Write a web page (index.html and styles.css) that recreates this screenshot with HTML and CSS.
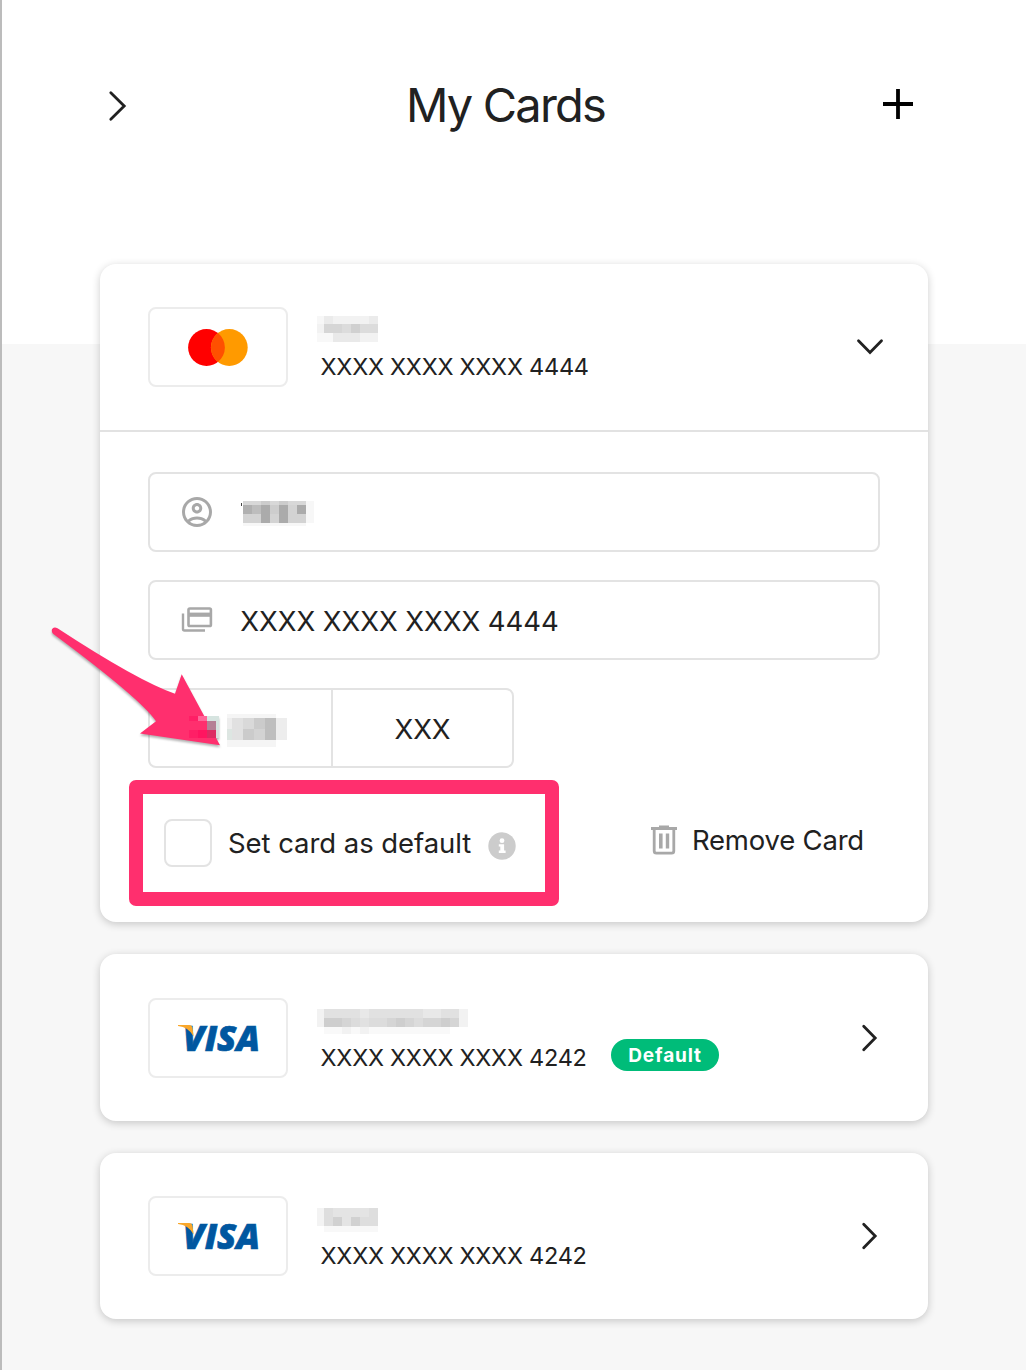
FILE: index.html
```html
<!DOCTYPE html>
<html lang="en">
<head>
<meta charset="utf-8">
<title>My Cards</title>
<link rel="stylesheet" href="styles.css">
</head>
<body>
<div class="page">
  <header class="header">
    <svg class="back" width="20" height="32" viewBox="0 0 20 32"><path d="M2.800 2.800 16.200 16 2.800 29.200"/></svg>
    <h1 class="title">My Cards</h1>
    <svg class="add" width="30" height="30" viewBox="0 0 30 30"><path d="M0 15h30M15 0v30"/></svg>
  </header>

  <main class="cards">
    <section class="card">
      <div class="card-head open">
        <div class="brand">
          <svg width="60" height="38" viewBox="0 0 60 38"><circle cx="18.500" cy="19.500" r="18.400" fill="#f00"/><circle cx="41.300" cy="19.500" r="18.400" fill="#ff9a00"/><path d="M29.900 5.060a18.400 18.400 0 0 1 0 28.880a18.400 18.400 0 0 1 0-28.880z" fill="#ff5000"/></svg>
        </div>
        <div class="summary">
          <svg class="mosaic" width="64" height="28" viewBox="1 1 64 28" shape-rendering="crispEdges">
            <path fill="#f7f7f7" d="M0 1h8v8h-8z"/><path fill="#ebebeb" d="M8 1h9v8h-9zM53 1h9v8h-9z"/><path fill="#f2f2f2" d="M17 1h36v8h-36zM0 9h8v9h-8zM44 18h18v9h-18z"/>
            <path fill="#d6d6d6" d="M8 9h18v9h-18z"/><path fill="#dcdcdc" d="M26 9h36v9h-36z"/><path fill="#d0d0d0" d="M35 9h9v9h-9z"/>
            <path fill="#f8f8f8" d="M0 18h17v9h-17z"/><path fill="#e9e9e9" d="M17 18h27v9h-27z"/>
          </svg>
          <div class="number">XXXX XXXX XXXX 4444</div>
        </div>
        <svg class="chevron" width="28" height="28" viewBox="0 0 28 28"><path d="M2.500 7.700 14 19.500 25.500 7.700"/></svg>
      </div>

      <div class="details">
        <div class="field">
          <svg class="field-icon" width="36" height="36" viewBox="0 0 24 24"><path fill="#a8a8a8" d="M12 2C6.480 2 2 6.480 2 12s4.480 10 10 10 10-4.480 10-10S17.520 2 12 2zM7.350 18.500C8.660 17.560 10.260 17 12 17s3.340.560 4.650 1.500C15.340 19.440 13.740 20 12 20s-3.340-.560-4.650-1.500zm10.790-1.380C16.450 15.800 14.320 15 12 15s-4.450.800-6.140 2.120C4.700 15.730 4 13.950 4 12c0-4.420 3.580-8 8-8s8 3.580 8 8c0 1.950-.700 3.730-1.860 5.120zM12 6c-1.930 0-3.500 1.570-3.500 3.500S10.070 13 12 13s3.500-1.570 3.500-3.500S13.930 6 12 6zm0 5c-.830 0-1.500-.670-1.500-1.500S11.170 8 12 8s1.500.670 1.500 1.500S12.830 11 12 11z"/></svg>
          <svg class="mosaic" width="74" height="26" viewBox="0 0 74 26" shape-rendering="crispEdges">
            <path fill="#444" d="M0 2h1v3h-1z"/><path fill="#d8d8d8" d="M2 0h63v4h-63z"/><path fill="#ccc" d="M20 0h9v4h-9zM38 0h9v4h-9z"/>
            <path fill="#d3d3d3" d="M2 4h63v18h-63z"/><path fill="#b0b0b0" d="M2 4h9v9h-9z"/><path fill="#bdbdbd" d="M11 4h9v9h-9z"/><path fill="#cdcdcd" d="M29 4h9v9h-9z"/>
            <path fill="#ababab" d="M20 4h9v18h-9zM38 4h9v18h-9zM56 4h9v9h-9z"/><path fill="#f7f7f7" d="M65 0h8v22h-8zM2 22h63v3h-63z"/>
          </svg>
        </div>
        <div class="field">
          <svg class="field-icon" width="36" height="36" viewBox="0 0 36 36"><path fill="none" stroke="#a8a8a8" stroke-width="2.400" d="M4 11.500V27q0 1.500 1.500 1.500H26"/><rect x="9.500" y="6.500" width="22.400" height="17.500" rx="1.300" fill="none" stroke="#a8a8a8" stroke-width="2.600"/><path fill="#a8a8a8" d="M10 10.600h22v4.200H10z"/></svg>
          <span class="field-text number-text">XXXX XXXX XXXX 4444</span>
        </div>
        <div class="field short">
          <div class="half">
            <svg class="mosaic expiry" width="60" height="33" viewBox="0 0 60 33" shape-rendering="crispEdges">
              <path fill="#f5f5f5" d="M0 0h49v33h-49z"/><path fill="#ededed" d="M0 4h5v11h-5zM49 4h11v22h-11z"/><path fill="#dde6e2" d="M0 15h5v11h-5z"/><path fill="#e1e1e1" d="M5 4h11v22h-11z"/><path fill="#d9d9d9" d="M16 4h11v11h-11z"/><path fill="#cbcbcb" d="M27 4h11v11h-11zM16 15h11v11h-11z"/><path fill="#d3d3d3" d="M27 15h11v11h-11z"/><path fill="#bebebe" d="M38 4h11v22h-11z"/>
            </svg>
          </div>
          <div class="half code"><span class="field-text">XXX</span></div>
        </div>
        <div class="actions">
          <label class="default-option">
            <span class="checkbox"></span>
            <span class="action-text">Set card as default</span>
            <svg class="info" width="28" height="28" viewBox="0 0 28 28"><circle cx="14" cy="14" r="13.700" fill="#ccc"/><circle cx="14" cy="8.700" r="2.400" fill="#fff"/><path fill="#fff" d="M10.800 12.300h5.300v6.300h1.500v2.300h-6.800v-2.300h1.500v-4h-1.500z"/></svg>
          </label>
          <div class="remove">
            <svg width="26" height="30" viewBox="0 0 26 30"><path fill="#a8a8a8" d="M0 2h8V.500h10V2h8v3H0z"/><path fill="none" stroke="#a8a8a8" stroke-width="2.800" d="M3.200 4v22q0 2.100 2.100 2.100h15.400q2.100 0 2.100-2.100V4"/><path fill="#a8a8a8" d="M8 8.500h3.600v15H8zM14.800 8.500h3.400v15h-3.400z"/></svg>
            <span class="action-text">Remove Card</span>
          </div>
        </div>
      </div>
    </section>

    <section class="card">
      <div class="card-head">
        <div class="brand">
          <svg width="90" height="60" viewBox="-3 -15 90 60"><text class="visa" x="7" y="28" textLength="77" lengthAdjust="spacingAndGlyphs">VISA</text><path fill="#f9a72b" d="M2 2h11q3 0 3.500 3l1.200 8.500Q12.500 4 2 3z"/></svg>
        </div>
        <div class="summary">
          <svg class="mosaic" width="152" height="28" viewBox="0 0 152 28" shape-rendering="crispEdges">
            <path fill="#f2f2f2" d="M0 2h7v18h-7zM142 2h9v18h-9z"/><path fill="#e1e1e1" d="M7 2h135v18h-135z"/><path fill="#e8e8e8" d="M43 2h9v9h-9zM106 2h18v9h-18z"/>
            <path fill="#cecece" d="M7 11h18v9h-18zM79 11h9v9h-9zM124 11h9v9h-9z"/><path fill="#d5d5d5" d="M25 11h9v9h-9zM70 11h9v9h-9zM88 11h9v9h-9zM106 11h18v9h-18zM133 11h9v9h-9z"/><path fill="#dcdcdc" d="M34 11h9v9h-9zM52 11h18v9h-18zM97 11h9v9h-9z"/>
            <path fill="#f9f9f9" d="M7 20h126v7h-126z"/><path fill="#f2f2f2" d="M25 20h9v7h-9zM43 20h9v7h-9z"/>
          </svg>
          <div class="number">XXXX XXXX XXXX 4242</div>
        </div>
        <span class="badge">Default</span>
        <svg class="chevron" width="28" height="28" viewBox="0 0 28 28"><path d="M7.700 2.300 19.200 14 7.700 25.700"/></svg>
      </div>
    </section>

    <section class="card">
      <div class="card-head">
        <div class="brand">
          <svg width="90" height="60" viewBox="-3 -15 90 60"><text class="visa" x="7" y="28" textLength="77" lengthAdjust="spacingAndGlyphs">VISA</text><path fill="#f9a72b" d="M2 2h11q3 0 3.500 3l1.200 8.500Q12.500 4 2 3z"/></svg>
        </div>
        <div class="summary">
          <svg class="mosaic" width="64" height="28" viewBox="0 -3 64 28" shape-rendering="crispEdges">
            <path fill="#f3f3f3" d="M0 0h7v18h-7z"/><path fill="#e4e4e4" d="M7 0h54v18h-54z"/><path fill="#dedede" d="M7 0h9v18h-9zM52 0h9v18h-9zM43 9h9v9h-9z"/><path fill="#d1d1d1" d="M16 9h9v9h-9zM34 9h9v9h-9z"/><path fill="#f8f8f8" d="M7 18h54v6h-54z"/>
          </svg>
          <div class="number">XXXX XXXX XXXX 4242</div>
        </div>
        <svg class="chevron" width="28" height="28" viewBox="0 0 28 28"><path d="M7.700 2.300 19.200 14 7.700 25.700"/></svg>
      </div>
    </section>
  </main>

  <div class="highlight"></div>
  <svg class="arrow" width="180" height="130" viewBox="45 620 180 130">
    <path fill="#ff2f6e" d="M57.500 628.300Q138 681 175 693.800L181.700 674.300 220 745.300 140 733.500 156 721.200Q141 699 53 633.700C50 630 53 626 57.500 628.300z"/>
    <g shape-rendering="crispEdges"><path fill="#ff1f66" d="M189 716h9v5h-9zM189 730h9v8h-9z"/><path fill="#ff6699" d="M198 716h9v5h-9z"/><path fill="#d6e4e0" d="M207 716h12v5h-12zM216 721h3v9h-3z"/><path fill="#b58095" d="M207 721h9v9h-9z"/><path fill="#ff1560" d="M198 730h9v8h-9z"/><path fill="#dd2b63" d="M207 730h9v8h-9z"/><path fill="#dcdcdc" d="M216 730h3v8h-3z"/></g>
  </svg>
  <div class="marker"></div>
</div>
</body>
</html>
```
FILE: styles.css
```css
* { box-sizing: border-box; }
body { margin: 0; background: #f7f7f7; color: #212121; font-family: Inter, "Liberation Sans", sans-serif; }
svg { display: block; flex: none; }
.page { position: relative; height: 1370px; overflow: hidden; border-left: 2px solid #bcbcbc; }
.header { height: 344px; padding: 74px 113px 0 106px; background: #fff; display: flex; justify-content: space-between; align-items: flex-start; }
.back, .chevron { fill: none; stroke: #212121; stroke-linecap: round; stroke-linejoin: miter; stroke-width: 2.8; }
.back { margin-top: 16px; }
.add { margin-top: 15px; stroke: #000; stroke-width: 3.8; }
.title { margin: 0; font-size: 47px; line-height: 62px; font-weight: 400; letter-spacing: -1.8px; white-space: nowrap; }
.cards { margin: -80px 98px 0; display: flex; flex-direction: column; gap: 32px; position: relative; }
.card { background: #fff; border-radius: 16px; box-shadow: 0 2px 8px rgba(0,0,0,.2); }
.card-head { height: 167px; padding: 0 44px 0 48px; display: flex; align-items: center; }
.card:last-child .card-head { height: 166px; }
.card-head.open { height: 168px; border-bottom: 2px solid #e2e2e2; }
.brand { width: 140px; height: 80px; flex: none; border: 2px solid #ececec; border-radius: 8px; display: flex; align-items: center; justify-content: center; }
.visa { font: italic 800 36px "Open Sans", sans-serif; fill: #0057a0; stroke: #0057a0; stroke-width: .7; }
.summary { margin-left: 27px; height: 72px; }
.summary .mosaic { margin: 5px 0 0 2px; }
.number { margin: 7px 0 0 5.6px; font-size: 23.5px; line-height: 32px; letter-spacing: -.25px; white-space: nowrap; }
.badge { margin: 34px 0 0 24.4px; width: 108px; height: 32px; border-radius: 16px; background: #00bc79; color: #fff; font-size: 19px; line-height: 33px; font-weight: 700; letter-spacing: .9px; text-align: center; }
.chevron { margin-left: auto; }
.details { padding: 40px 48px 32px; display: flex; flex-direction: column; gap: 28px; }
.field { height: 80px; border: 2px solid #e3e3e3; border-radius: 8px; display: flex; align-items: center; padding-left: 29px; }
.field .mosaic { margin-top: 3px; }
.field .expiry { margin-top: 5px; }
.field-icon { margin-right: 26px; }
.field-text { font-size: 27.5px; line-height: 40px; letter-spacing: -.05px; white-space: nowrap; padding-top: 2px; }
.number-text { margin-left: -.7px; }
.short { width: 366px; padding: 0; align-items: stretch; }
.half { width: 181px; display: flex; align-items: center; padding-left: 77px; }
.half.code { border-left: 2px solid #e3e3e3; padding: 0; justify-content: center; }
.actions { height: 94px; padding: 0 16px; display: flex; justify-content: space-between; align-items: center; }
.default-option, .remove { display: flex; align-items: center; }
.checkbox { width: 48px; height: 48px; border: 2px solid #e3e3e3; border-radius: 8px; margin-right: 16px; }
.action-text { font-size: 27.5px; line-height: 40px; letter-spacing: -.06px; white-space: nowrap; }
.info { margin: 5px 0 0 16.6px; }
.remove { gap: 15px; margin-bottom: 6px; }
.remove .action-text { letter-spacing: -.2px; }
.highlight { position: absolute; left: 127px; top: 780px; width: 430px; height: 126px; border: 14px solid #ff2f6e; border-radius: 7px; }
.arrow { position: absolute; left: 43px; top: 620px; filter: drop-shadow(0 2px 1px rgba(0,0,0,.3)); }
.marker { position: absolute; left: -2px; top: 128px; width: 2px; height: 1px; background: #ef2864; }
```
